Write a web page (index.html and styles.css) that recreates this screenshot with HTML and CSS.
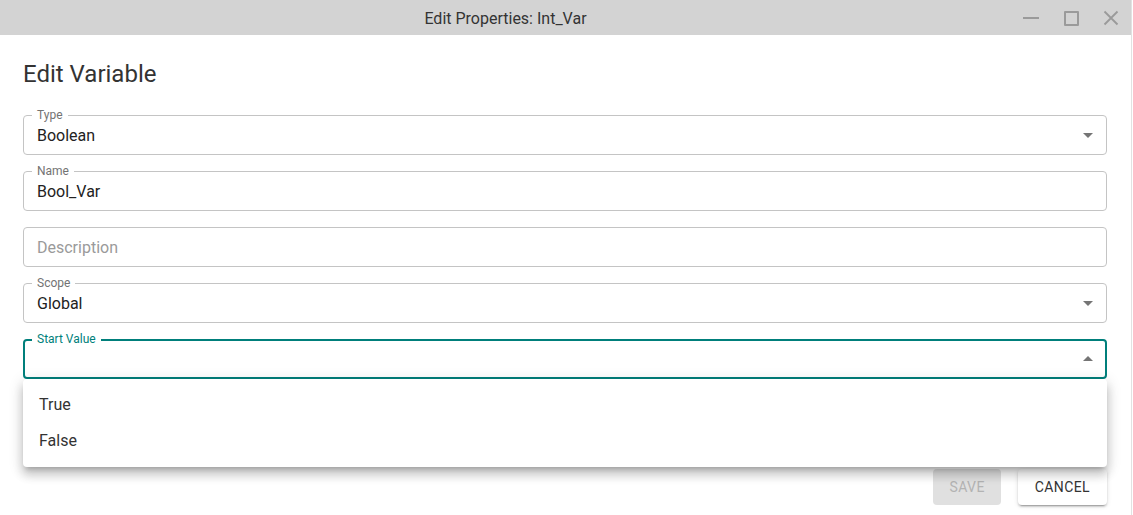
FILE: index.html
```html
<!DOCTYPE html>
<html>
<head>
<meta charset="utf-8">
<link rel="stylesheet" href="styles.css">
</head>
<body>
<div class="window">
  <div class="titlebar">
    <div class="title">Edit Properties: Int_Var</div>
    <div class="controls">
      <div class="ctl"><span class="min"></span></div>
      <div class="ctl"><span class="max"></span></div>
      <div class="ctl">
        <svg width="16" height="16" viewBox="0 0 16 16"><path d="M1.5 1.5L14.5 14.5M14.5 1.5L1.5 14.5" stroke="#9a9a9a" stroke-width="1.8" fill="none"/></svg>
      </div>
    </div>
  </div>
  <div class="content">
    <h1 class="heading">Edit Variable</h1>
    <div class="fields">
      <div class="field">
        <fieldset class="outline"><legend>Type</legend></fieldset>
        <span class="value">Boolean</span>
        <svg class="arrow" width="24" height="24" viewBox="0 0 24 24"><path d="M7 10l5 5 5-5z"/></svg>
      </div>
      <div class="field">
        <fieldset class="outline"><legend>Name</legend></fieldset>
        <span class="value">Bool_Var</span>
      </div>
      <div class="field">
        <fieldset class="outline nolabel"></fieldset>
        <span class="value placeholder">Description</span>
      </div>
      <div class="field">
        <fieldset class="outline"><legend>Scope</legend></fieldset>
        <span class="value">Global</span>
        <svg class="arrow" width="24" height="24" viewBox="0 0 24 24"><path d="M7 10l5 5 5-5z"/></svg>
      </div>
      <div class="field focused">
        <fieldset class="outline"><legend>Start Value</legend></fieldset>
        <span class="value"></span>
        <svg class="arrow" width="24" height="24" viewBox="0 0 24 24"><path d="M7 14l5-5 5 5z"/></svg>
        <ul class="menu">
          <li>True</li>
          <li>False</li>
        </ul>
      </div>
    </div>
    <div class="actions">
      <button class="btn disabled">Save</button>
      <button class="btn cancel">Cancel</button>
    </div>
  </div>
</div>
</body>
</html>
```

FILE: styles.css
```css
* { box-sizing: border-box; }
html, body { margin: 0; padding: 0; background: #fff; }
body {
  font-family: Roboto, "Liberation Sans", Arial, sans-serif;
  color: #333;
  overflow: hidden;
  height: 515px;
}
.window {
  width: 1132px;
  height: 515px;
  border-right: 1px solid #e2e2e2;
}
.titlebar {
  height: 35px;
  background: #d3d3d3;
  display: flex;
  align-items: center;
}
.title {
  flex: 1;
  text-align: center;
  font-size: 16px;
  color: #333;
  padding-top: 1px;
}
.controls {
  display: flex;
  width: 120px;
}
.ctl {
  width: 40px;
  height: 35px;
  display: flex;
  align-items: center;
  justify-content: center;
}
.min {
  display: block;
  width: 16px;
  height: 2px;
  background: #9a9a9a;
  margin-top: 1px;
}
.max {
  display: block;
  width: 15px;
  height: 15px;
  border: 2px solid #9a9a9a;
  border-radius: 1px;
  margin-top: 1px;
}
.content {
  padding: 23px 24px 0 23px;
}
.heading {
  margin: 0 0 25px 0;
  font-size: 24px;
  font-weight: 400;
  line-height: 32px;
  color: #333;
}
.fields {
  display: flex;
  flex-direction: column;
  gap: 16px;
}
.field {
  position: relative;
  height: 40px;
  display: flex;
  align-items: center;
  padding: 0 14px;
}
.outline {
  position: absolute;
  top: -5px;
  left: 0;
  right: 0;
  bottom: 0;
  margin: 0;
  padding: 0 8px;
  border: 1px solid #c4c4c4;
  border-radius: 4px;
  pointer-events: none;
}
.outline.nolabel { top: 0; }
.outline legend {
  font-size: 12px;
  line-height: 11px;
  padding: 0 5px;
  color: #737373;
}
.value {
  font-size: 16px;
  color: #222;
  flex: 1;
}
.value.placeholder { color: #9a9a9a; }
.arrow {
  position: absolute;
  right: 7px;
  top: 8px;
  fill: #757575;
}
.focused .outline {
  border: 2px solid #007f7b;
  padding: 0 7px;
}
.focused .outline legend { color: #007f7b; }
.menu {
  position: absolute;
  top: 40px;
  left: 0;
  right: 0;
  margin: 0;
  padding: 8px 0 8px;
  list-style: none;
  background: #fff;
  border-radius: 4px;
  box-shadow: 0px 5px 5px -3px rgba(0,0,0,0.2), 0px 8px 10px 1px rgba(0,0,0,0.14), 0px 3px 14px 2px rgba(0,0,0,0.12);
  z-index: 5;
}
.menu li {
  height: 36px;
  line-height: 35px;
  padding-left: 16px;
  font-size: 16px;
  color: #333;
}
.actions {
  display: flex;
  justify-content: flex-end;
  gap: 17px;
  margin-top: 90px;
}
.btn {
  height: 36px;
  padding: 0 16px;
  border: none;
  border-radius: 4px;
  font-family: Roboto, "Liberation Sans", Arial, sans-serif;
  font-size: 14px;
  text-transform: uppercase;
  letter-spacing: 0.4px;
  color: #333;
  background: #fff;
  box-shadow: 0px 3px 1px -2px rgba(0,0,0,0.2), 0px 2px 2px 0px rgba(0,0,0,0.14), 0px 1px 5px 0px rgba(0,0,0,0.12);
}
.btn.cancel { padding: 0 17px; }
.btn.disabled {
  background: #e0e0e0;
  color: #b3b3b3;
  box-shadow: none;
}
```
